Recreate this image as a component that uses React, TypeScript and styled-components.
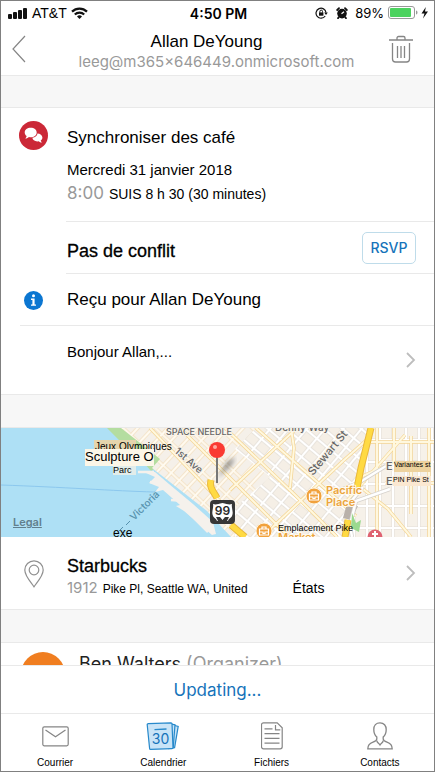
import React from 'react';
import styled, { createGlobalStyle, css } from 'styled-components';

const GlobalStyle = createGlobalStyle`
  *, *::before, *::after { box-sizing: border-box; }
  body { margin: 0; background: #fff; }
  button { font: inherit; color: inherit; background: none; border: 0; padding: 0; cursor: pointer; }
  h1, h2, p { margin: 0; font-weight: 400; }
  svg { display: block; flex: none; }
`;

const arial = `'Liberation Sans', Arial, sans-serif`;
const inter = `Inter, 'Liberation Sans', sans-serif`;
const line = '#e9e9e9';

const Phone = styled.div`
  display: flex;
  flex-direction: column;
  height: 100vh;
  border: 1px solid #808080;
  background: #fff;
  color: #000;
  font-family: ${arial};
`;

const StatusBar = styled.div`
  display: grid;
  grid-template-columns: 1fr auto 1fr;
  align-items: center;
  height: 24px;
  padding: 0 5px 0 7px;
`;

const StatusGroup = styled.div<{ $end?: boolean }>`
  display: flex;
  align-items: center;
  gap: 4px;
  font-size: 14px;
  ${(p) => p.$end && css`
    justify-content: flex-end;
    font: 13px ${inter};
  `}
`;

const StatusIcons = styled.span`
  display: flex;
  align-items: center;
  gap: 8px;
  padding-right: 3px;
`;

const Clock = styled.time`
  font: 600 14px ${inter};
`;

const Header = styled.header`
  display: grid;
  grid-template-columns: 40px 1fr 40px;
  align-items: center;
  height: 51px;
  padding: 0 13px 0 11px;
  border-bottom: 1px solid ${line};
`;

const IconButton = styled.button<{ $start?: boolean }>`
  display: grid;
  place-items: center ${(p) => (p.$start ? 'start' : 'center')};
  height: 40px;
  padding-bottom: 2px;
`;

const HeaderText = styled.div`
  display: flex;
  flex-direction: column;
  align-items: center;
  padding-top: 2px;
`;

const Name = styled.h1`
  padding-right: 20px;
  font-size: 17px;
  line-height: 20px;
`;

const Email = styled.p`
  font: 15px/19px ${inter};
  color: #999;
  white-space: nowrap;
`;

const Content = styled.main`
  flex: 1;
  min-height: 0;
  overflow-y: auto;
  scrollbar-width: none;
`;

const Gap = styled.div<{ $first?: boolean }>`
  height: ${(p) => (p.$first ? 32 : 33)}px;
  background: #f7f7f7;
  border-bottom: 1px solid ${line};
`;

const Section = styled.section`
  border-bottom: 1px solid ${line};
`;

const Row = styled.div<{ $height: number }>`
  display: grid;
  grid-template-columns: 65px 1fr;
  height: ${(p) => p.$height}px;
`;

const RowIcon = styled.div<{ $top: number }>`
  justify-self: center;
  padding-top: ${(p) => p.$top}px;
`;

const RowBody = styled.div<{ $line?: boolean }>`
  display: flex;
  align-items: center;
  justify-content: space-between;
  padding: 0 18px 0 1px;
  border-bottom: ${(p) => (p.$line ? `1px solid ${line}` : '0')};
`;

const Divider = styled.hr`
  height: 1px;
  margin: 0 0 0 19px;
  border: 0;
  background: ${line};
`;

const EventBody = styled(RowBody)`
  flex-direction: column;
  align-items: flex-start;
  justify-content: flex-start;
  padding-top: 18px;
`;

const Title = styled.h2<{ $strong?: boolean }>`
  font-size: 17px;
  line-height: 24px;
  ${(p) => p.$strong && css`
    padding-top: 6px;
    font-size: 18px;
    -webkit-text-stroke: 0.3px #000;
  `}
`;

const DateLine = styled.p`
  padding-top: 8px;
  font-size: 15px;
  line-height: 24px;
`;

const Detail = styled.p<{ $small?: boolean }>`
  display: flex;
  align-items: baseline;
  gap: 5px;
  font-size: ${(p) => (p.$small ? 12 : 14)}px;
  line-height: ${(p) => (p.$small ? 20 : 22)}px;
`;

const Muted = styled.span<{ $large?: boolean }>`
  color: #999;
  font-family: ${inter};
  font-size: ${(p) => (p.$large ? 17 : 15)}px;
`;

const Rsvp = styled.button`
  width: 54px;
  height: 32px;
  border: 1px solid #bfdcea;
  border-radius: 5px;
  color: #1673ba;
  font: 500 14px ${inter};
`;

const Message = styled.p`
  padding-bottom: 18px;
  font-size: 15px;
`;

const ChevronButton = styled.button`
  padding: 4px 0;
`;

const MapBox = styled.div`
  position: relative;
  height: 109px;
  overflow: hidden;
`;

const Legal = styled.a`
  position: absolute;
  left: 12px;
  bottom: 8px;
  color: #617f8d;
  font: 600 11px ${inter};
`;

const Place = styled.div`
  display: flex;
  flex-direction: column;
`;

const Country = styled.span`
  padding-left: 40px;
  font-size: 14px;
`;

const Attendee = styled.div`
  display: flex;
  align-items: center;
  gap: 14px;
  padding: 9px 20px;
  font: 18px/24px ${inter};
  color: #222;
`;

const Avatar = styled.span`
  flex: none;
  width: 44px;
  height: 44px;
  border-radius: 50%;
  background: #f07e20;
`;

const AttendeeName = styled.p`
  align-self: flex-start;
`;

const Role = styled.span`
  color: #999;
`;

const Updating = styled.p`
  height: 48px;
  border-top: 1px solid ${line};
  color: #1673ba;
  font: 17px/48px ${inter};
  text-align: center;
`;

const Tabs = styled.nav`
  display: grid;
  grid-template-columns: repeat(4, 1fr);
  height: 58px;
  border-top: 1px solid ${line};
`;

const Tab = styled.button`
  display: flex;
  flex-direction: column;
  align-items: center;
  gap: 7px;
  padding-top: 8px;
  font: 10px/12px ${arial};
`;

const Signal = () => (
  <svg width="20" height="12" viewBox="0 0 20 12" fill="#111" aria-hidden="true">
    <rect x="0" y="7" width="4" height="5" rx="1" />
    <rect x="5" y="5" width="4" height="7" rx="1" />
    <rect x="10" y="3" width="4" height="9" rx="1" />
    <rect x="15" y="1" width="4" height="11" rx="1" />
  </svg>
);

const Wifi = () => (
  <svg width="17" height="12" viewBox="0 0 17 12" fill="none" stroke="#111" strokeWidth="2.2" aria-hidden="true">
    <path d="M1 4.6a10.8 10.8 0 0 1 15 0M3.8 7.5a6.8 6.8 0 0 1 9.4 0" />
    <path d="M6 9.4a3.6 3.6 0 0 1 5 0L8.5 12Z" fill="#111" stroke="none" />
  </svg>
);

const RotationLock = () => (
  <svg width="13" height="12" viewBox="0 0 13 12" fill="none" stroke="#111" strokeWidth="1.2" aria-hidden="true">
    <path d="M10.2 9A5 5 0 1 1 11 5.6" />
    <path d="M9.2 5.6h3.6L11 8Z" fill="#111" stroke="none" />
    <rect x="4" y="5.4" width="4.4" height="3.3" fill="#111" stroke="none" />
    <path d="M4.9 5.6V4.4a1.3 1.3 0 0 1 2.6 0v1.2" strokeWidth="1" />
  </svg>
);

const Alarm = () => (
  <svg width="12" height="12" viewBox="0 0 12 12" aria-hidden="true">
    <circle cx="6" cy="6.6" r="4.8" fill="#111" />
    <path d="M1.200 3 3 1.200M10.800 3 9 1.200M2.600 10.400l-.6.8M9.400 10.400l.6.800" stroke="#111" strokeWidth="1.800" strokeLinecap="round" />
    <path d="M5.500 6.800 8 4.800" fill="none" stroke="#fff" strokeWidth="1.200" />
  </svg>
);

const Battery = () => (
  <svg width="41" height="14" viewBox="0 0 41 14" aria-hidden="true">
    <rect x=".5" y=".5" width="26" height="12" rx="2.5" fill="#fff" stroke="#999" />
    <rect x="2" y="2" width="21" height="9" rx="1" fill="#4cd35f" />
    <path d="M28 4.5c2 .5 2 3.500 0 4Z" fill="#999" />
    <path d="M37.800 1 33.500 7.500h3L35 12.400l5-6.800h-3Z" fill="#111" />
  </svg>
);

const Back = () => (
  <svg width="14" height="28" viewBox="0 0 14 28" fill="none" stroke="#858585" strokeWidth="1.2">
    <path d="M13 1 1 14l12 13" />
  </svg>
);

const Trash = () => (
  <svg width="24" height="28" viewBox="0 0 24 28" fill="none" stroke="#858585" strokeWidth="1.3">
    <path d="M0 5h24M8 5V3a1.5 1.5 0 0 1 1.5-1.5h5A1.5 1.5 0 0 1 16 3v2M3.5 8v16a3 3 0 0 0 3 3h11a3 3 0 0 0 3-3V8M8.5 11v12M12 11v12M15.5 11v12" />
  </svg>
);

const Chat = () => (
  <svg width="29" height="29" viewBox="0 0 29 29" aria-hidden="true">
    <circle cx="14.5" cy="14.5" r="14.5" fill="#cb2837" />
    <path d="M11.7 6.7c-3.4 0-6 2-6 4.7 0 1.5.8 2.8 2 3.7-.2 1-.7 1.8-1.4 2.5 1.6-.1 2.8-.7 3.7-1.6.5.1 1.1.2 1.7.2 3.4 0 6-2.1 6-4.8s-2.6-4.7-6-4.7Z" fill="#fff" />
    <path d="M18.4 12.6c2.8.1 5 1.8 5 4 0 1.3-.7 2.3-1.7 3 .2.8.6 1.5 1.2 2-1.3 0-2.4-.5-3.2-1.3l-1.4.1c-2.7 0-4.8-1.6-4.9-3.6 2.9-.3 5-2 5-4.2Z" fill="#fff" />
  </svg>
);

const Info = () => (
  <svg width="19" height="19" viewBox="0 0 19 19" aria-hidden="true">
    <circle cx="9.5" cy="9.5" r="9.5" fill="#0b76d1" />
    <circle cx="9.5" cy="4.7" r="1.5" fill="#fff" />
    <path d="M7 7.6h3.6v5.8H12v1.4H7v-1.4h1.4V9H7Z" fill="#fff" />
  </svg>
);

const Chevron = () => (
  <svg width="10" height="16" viewBox="0 0 10 16" fill="none" stroke="#bdbdbd" strokeWidth="1.8">
    <path d="m1 1 7 7-7 7" />
  </svg>
);

const Pin = () => (
  <svg width="20" height="28" viewBox="0 0 20 28" fill="none" stroke="#909090" strokeWidth="1.2" aria-hidden="true">
    <path d="M10 26.8C7 22.4.8 15.8.8 10a9.2 9.2 0 0 1 18.4 0c0 5.8-6.2 12.4-9.2 16.8Z" />
    <circle cx="10" cy="10" r="4.8" />
  </svg>
);

const Mail = () => (
  <svg width="27" height="28" viewBox="0 0 27 28" fill="none" stroke="#858585" strokeWidth="1.2">
    <rect x=".8" y="4.8" width="25.4" height="19" rx="1.5" />
    <path d="m3.5 8 10 6.8L23.5 8" />
  </svg>
);

const Calendar = () => (
  <svg width="34" height="28" viewBox="0 0 34 28" fill="#c9e4f7" stroke="#2789cb" strokeWidth="1.2">
    <path d="m27 3 5.2 1.4-3.600 21.200L23 26Z" />
    <path d="m25 2 4 .8-1.800 23-4.200.7Z" />
    <path d="M2.400 1.700 25 .8a1 1 0 0 1 1 1l1 23.800a1 1 0 0 1-1 1L4.600 27.400a1 1 0 0 1-1-1L1.200 2.800a1 1 0 0 1 1.200-1.100Z" />
    <path d="m8.500 7.600 12-.6" strokeWidth="1.4" />
    <text x="14.500" y="22" textAnchor="middle" fontFamily={inter} fontSize="14" fill="#1673ba" stroke="none">30</text>
  </svg>
);

const FileIcon = () => (
  <svg width="22" height="28" viewBox="0 0 22 28" fill="none" stroke="#858585" strokeWidth="1.2">
    <path d="M2.5.8h13.700l5 5v19a2 2 0 0 1-2 2H2.500a2 2 0 0 1-2-2v-22a2 2 0 0 1 2-2ZM14.500 3v4.800h4.800M3.500 6.800h8M3.500 11.600h15M3.500 16.400h15M3.500 21.200h15" />
  </svg>
);

const Person = () => (
  <svg width="26" height="28" viewBox="0 0 26 28" fill="none" stroke="#858585" strokeWidth="1.3">
    <path d="M13 .8c-4 0-6.200 3-6.200 6.600 0 3 1 5.800 3 7.500v2.200c0 1.800-1.400 2.300-3.800 3.100-3.400 1.100-5.200 2.400-5.200 6.700h24.400c0-4.300-1.800-5.600-5.200-6.700-2.400-.8-3.800-1.300-3.800-3.100v-2.200c2-1.700 3-4.500 3-7.500C19.200 3.800 17 .8 13 .8Z" />
    <path d="M9.800 18.500c0 2.200 2 2.600 3.200 4.500 1.200-1.900 3.200-2.300 3.200-4.500" />
  </svg>
);

const avenues =
  'm225 428 69 66 43 43M256 428l100 88M180 428l57 57 52 52M150 428l83 87M230 490l67-62M262 537l81-76 28-25M290 488l4-40-3-20M345 503l60-68M356 479l27-12M358 485l30 24 23 28M377 428v109M394 428v36M411 436v78M429 428v109M371 442h63M385 483h49';

const MapDrawing = () => (
  <svg width="100%" height="109" viewBox="1 428 433 109" preserveAspectRatio="xMidYMid slice" role="img" aria-label="Starbucks, Pike Place">
    <defs>
      <pattern id="belltown" width="22" height="11" patternUnits="userSpaceOnUse" patternTransform="translate(152 470) rotate(-47)">
        <rect width="22" height="11" fill="#f5f0e9" />
        <path d="M0 5h22M11 0v11" stroke="#f3dbb2" strokeWidth="3" />
        <path d="M0 5h22M11 0v11" stroke="#fffaf0" strokeWidth="1.800" />
      </pattern>
      <pattern id="downtown" width="12" height="14" patternUnits="userSpaceOnUse" patternTransform="translate(260 430) rotate(-50)">
        <rect width="12" height="14" fill="#f5efe6" />
        <path d="M0 7h12M6 0v14" stroke="#dedad4" strokeWidth="3.200" />
        <path d="M0 7h12M6 0v14" stroke="#fff" strokeWidth="2.200" />
      </pattern>
      <pattern id="hill" width="13" height="22" patternUnits="userSpaceOnUse" patternTransform="translate(374 429)">
        <rect width="13" height="22" fill="#f6f1e9" />
        <path d="M0 11h13M6 0v22" stroke="#e2ded7" strokeWidth="3" />
        <path d="M0 11h13M6 0v22" stroke="#fff" strokeWidth="2" />
      </pattern>
      <filter id="soft"><feGaussianBlur stdDeviation="2.200" /></filter>
    </defs>
    <rect x="1" y="428" width="433" height="109" fill="#aee0f5" />
    <path d="M1 485c60 2 115 6 153 7l12-6" fill="none" stroke="#8cc8ee" />
    <path d="M107 428h55l9 30-20 13-15-17-15-12Z" fill="#b4dda0" />
    <path d="M121 428h313v109H231l-24-26-55-43 8-9-16-13Z" fill="url(#belltown)" />
    <path d="M256 428h115l-19 109H235l-5-25 40-35-35-28Z" fill="url(#downtown)" />
    <path d="M371 428h63v109h-82l6-49Z" fill="url(#hill)" />
    <path d="M138 472h17l14 12 24 20 20 18 3 12-4 1-28-24-8-5 4-1-17-15-8 2 4-5-10-4 6-6-9-4Z" fill="#f5f1ec" />
    <path d="M138 472h16M150 482l14 1M171 500l14 1M186 510l22 22" fill="none" stroke="#f5f1ec" strokeWidth="2.500" />
    <path d={avenues} fill="none" stroke="#f4d493" strokeWidth="3.400" />
    <path d={avenues} fill="none" stroke="#fff8df" strokeWidth="2" />
    <path d="m346 507 12-1-7 14-8-2Z" fill="#b9b1aa" />
    <path d="m352 537-2-12 6-24 34-12M348 505l15-18M340 490l20-8 26-16" fill="none" stroke="#d5d1cc" strokeWidth="4" />
    <path d="m352 537-2-12 6-24 34-12M348 505l15-18M340 490l20-8 26-16" fill="none" stroke="#fff" strokeWidth="2.500" />
    <path d="m352 513 4 10 5-3-2 12-8-4Z" fill="#9bd98f" />
    <path d="m371 428-10 40-4 20M211 480c-2 8 3 12 6 18M231 525l14 12M348 520l-3 17" fill="none" stroke="#e9b83b" strokeWidth="7" />
    <path d="m371 428-10 40-4 20M211 480c-2 8 3 12 6 18M231 525l14 12M348 520l-3 17" fill="none" stroke="#ffda43" strokeWidth="5" />
    <g fontFamily={inter} fontSize="10" fontWeight="500" fill="#666" stroke="#f8f3ea" strokeWidth="2" paintOrder="stroke">
      <text x="166" y="435" fontSize="9">SPACE NEEDLE</text>
      <text x="275" y="431">Denny Way</text>
      <text transform="translate(174 452) rotate(41)">1st Ave</text>
      <text transform="translate(313 476) rotate(-50)" fontSize="11">Stewart St</text>
      <text x="386" y="470" fontSize="11">E</text>
      <text x="386" y="485" fontSize="11">E</text>
    </g>
    <text transform="translate(134 521) rotate(-45)" fontFamily={inter} fontSize="10" fontWeight="500" fill="#5792ae">Victoria</text>
    <path d="m119 531 4-4m3-2 4-4" stroke="#5792ae" />
    <g fontFamily={arial} fill="#000">
      <rect x="94" y="440" width="42" height="9" fill="#e5d5ad" />
      <text x="95" y="450" fontSize="10">Jeux Olympiques</text>
      <rect x="85" y="449" width="69" height="17" fill="#fcf6e7" />
      <text x="85" y="461" fontSize="13">Sculpture O</text>
      <rect x="113" y="466" width="23" height="9" fill="#e2edea" />
      <text x="113" y="473" fontSize="9">Parc</text>
      <text x="113" y="537" fontSize="12">exe</text>
      <rect x="394" y="461" width="37" height="11" fill="#edd29e" />
      <text x="394" y="467" fontSize="7">Variantes st</text>
      <rect x="393" y="476" width="38" height="10" fill="#fbe8d1" />
      <text x="393" y="482" fontSize="7">PIN Pike St</text>
    </g>
    <g fontFamily={inter} fontSize="11" fontWeight="600" fill="#eba53d" stroke="#fff9ed" strokeWidth="2" paintOrder="stroke">
      <text x="326" y="494">Pacific</text>
      <text x="326" y="506">Place</text>
      <text x="278" y="541">Market</text>
    </g>
    <text x="278" y="531" fontFamily={arial} fontSize="9">Emplacement Pike</text>
    {[[314, 496], [264, 531]].map(([x, y]) => (
      <g key={x} transform={`translate(${x} ${y})`}>
        <circle r="8" fill="#f1a13c" stroke="#fff4df" />
        <path d="M-4.500-2h9v6h-9ZM-2-2v-2h4v2M-4.500 1H-1v1.500h2V1h3.500" fill="none" stroke="#fff" strokeWidth="1.200" />
      </g>
    ))}
    <circle cx="375" cy="537" r="7.500" fill="#df6271" />
    <path d="M375 531v6M372 534h6" stroke="#fff" strokeWidth="2" />
    <rect x="210" y="500" width="25" height="24" rx="4" fill="#373737" />
    <path d="M213 504c3 1 5 0 9.500-1 4.500 1 6.500 2 9.500 1-1 4 2 8 0 12-1 2-3 2-4 5h-11c-1-3-3-3-4-5-2-4 1-8 0-12Z" fill="#fff" />
    <path d="M216 517h4l2.500 3 2.500-3h4l-2 4h-9Z" fill="#373737" />
    <text x="222.500" y="515" textAnchor="middle" fontFamily={inter} fontSize="12" fontWeight="600" fill="#292929">99</text>
    <path d="m218 478 8-16 9-5-3 8Z" fill="#444" opacity=".5" filter="url(#soft)" />
    <path d="M217 457v26" stroke="#777" strokeWidth="2" />
    <circle cx="217" cy="450" r="8" fill="#fa3a32" />
    <circle cx="215" cy="447" r="2" fill="#ffaaa0" />
  </svg>
);

const tabs = [
  { label: 'Courrier', Icon: Mail },
  { label: 'Calendrier', Icon: Calendar },
  { label: 'Fichiers', Icon: FileIcon },
  { label: 'Contacts', Icon: Person },
];

export default function App() {
  return (
    <Phone>
      <GlobalStyle />
      <StatusBar>
        <StatusGroup><Signal />AT&amp;T<Wifi /></StatusGroup>
        <Clock>4:50 PM</Clock>
        <StatusGroup $end>
          <StatusIcons><RotationLock /><Alarm /></StatusIcons>
          89%
          <Battery />
        </StatusGroup>
      </StatusBar>
      <Header>
        <IconButton $start aria-label="Retour"><Back /></IconButton>
        <HeaderText>
          <Name>Allan DeYoung</Name>
          <Email>leeg@m365x646449.onmicrosoft.com</Email>
        </HeaderText>
        <IconButton aria-label="Supprimer"><Trash /></IconButton>
      </Header>
      <Content>
        <Gap $first />
        <Section>
          <Row $height={114}>
            <RowIcon $top={13}><Chat /></RowIcon>
            <EventBody $line>
              <Title>Synchroniser des café</Title>
              <DateLine>Mercredi 31 janvier 2018</DateLine>
              <Detail><Muted $large>8:00</Muted>SUIS 8 h 30 (30 minutes)</Detail>
            </EventBody>
          </Row>
          <Row $height={52}>
            <span />
            <RowBody $line>
              <Title $strong>Pas de conflit</Title>
              <Rsvp>RSVP</Rsvp>
            </RowBody>
          </Row>
          <Row $height={51}>
            <RowIcon $top={17}><Info /></RowIcon>
            <RowBody><Title>Reçu pour Allan DeYoung</Title></RowBody>
          </Row>
          <Divider />
          <Row $height={68}>
            <span />
            <RowBody>
              <Message>Bonjour Allan,...</Message>
              <ChevronButton aria-label="Ouvrir le message"><Chevron /></ChevronButton>
            </RowBody>
          </Row>
        </Section>
        <Gap />
        <MapBox>
          <MapDrawing />
          <Legal href="#legal">Legal</Legal>
        </MapBox>
        <Section>
          <Row $height={72}>
            <RowIcon $top={23}><Pin /></RowIcon>
            <RowBody>
              <Place>
                <Title $strong>Starbucks</Title>
                <Detail $small>
                  <Muted>1912</Muted>Pike Pl, Seattle WA, United
                  <Country>États</Country>
                </Detail>
              </Place>
              <ChevronButton aria-label="Ouvrir le lieu"><Chevron /></ChevronButton>
            </RowBody>
          </Row>
        </Section>
        <Gap />
        <Attendee>
          <Avatar />
          <AttendeeName>Ben Walters <Role>(Organizer)</Role></AttendeeName>
        </Attendee>
      </Content>
      <Updating role="status">Updating...</Updating>
      <Tabs>
        {tabs.map(({ label, Icon }) => (
          <Tab key={label}><Icon />{label}</Tab>
        ))}
      </Tabs>
    </Phone>
  );
}
